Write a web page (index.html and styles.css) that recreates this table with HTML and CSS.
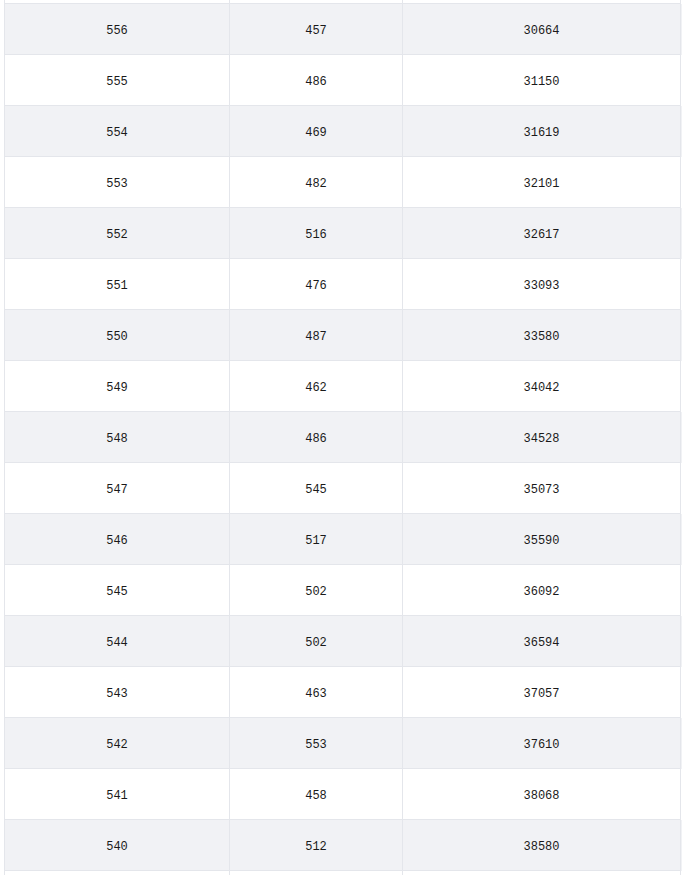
FILE: index.html
```html
<!DOCTYPE html>
<html>
<head>
<meta charset="utf-8">
<link rel="stylesheet" href="styles.css">
</head>
<body>
<div class="table">
  <div class="row"><div class="cell"></div><div class="cell"></div><div class="cell"></div></div>
  <div class="row alt"><div class="cell">556</div><div class="cell">457</div><div class="cell">30664</div></div>
  <div class="row"><div class="cell">555</div><div class="cell">486</div><div class="cell">31150</div></div>
  <div class="row alt"><div class="cell">554</div><div class="cell">469</div><div class="cell">31619</div></div>
  <div class="row"><div class="cell">553</div><div class="cell">482</div><div class="cell">32101</div></div>
  <div class="row alt"><div class="cell">552</div><div class="cell">516</div><div class="cell">32617</div></div>
  <div class="row"><div class="cell">551</div><div class="cell">476</div><div class="cell">33093</div></div>
  <div class="row alt"><div class="cell">550</div><div class="cell">487</div><div class="cell">33580</div></div>
  <div class="row"><div class="cell">549</div><div class="cell">462</div><div class="cell">34042</div></div>
  <div class="row alt"><div class="cell">548</div><div class="cell">486</div><div class="cell">34528</div></div>
  <div class="row"><div class="cell">547</div><div class="cell">545</div><div class="cell">35073</div></div>
  <div class="row alt"><div class="cell">546</div><div class="cell">517</div><div class="cell">35590</div></div>
  <div class="row"><div class="cell">545</div><div class="cell">502</div><div class="cell">36092</div></div>
  <div class="row alt"><div class="cell">544</div><div class="cell">502</div><div class="cell">36594</div></div>
  <div class="row"><div class="cell">543</div><div class="cell">463</div><div class="cell">37057</div></div>
  <div class="row alt"><div class="cell">542</div><div class="cell">553</div><div class="cell">37610</div></div>
  <div class="row"><div class="cell">541</div><div class="cell">458</div><div class="cell">38068</div></div>
  <div class="row alt"><div class="cell">540</div><div class="cell">512</div><div class="cell">38580</div></div>
  <div class="row"><div class="cell"></div><div class="cell"></div><div class="cell"></div></div>
</div>
</body>
</html>
```
FILE: styles.css
```css
html, body {
  margin: 0;
  padding: 0;
  background: #ffffff;
  overflow: hidden;
}
.table {
  margin-top: -47px;
  margin-left: 4px;
  width: 677px;
  border-left: 1px solid #e4e6eb;
  font-family: "Liberation Mono", "DejaVu Sans Mono", monospace;
  font-size: 12px;
  color: #1a1a1a;
}
.row {
  display: grid;
  grid-template-columns: 225px 173px 278px;
  background: #ffffff;
}
.row.alt {
  background: #f1f2f5;
}
.cell {
  box-sizing: border-box;
  height: 51px;
  padding-top: 3px;
  border-right: 1px solid #e4e6eb;
  border-bottom: 1px solid #e4e6eb;
  display: flex;
  align-items: center;
  justify-content: center;
}
```
